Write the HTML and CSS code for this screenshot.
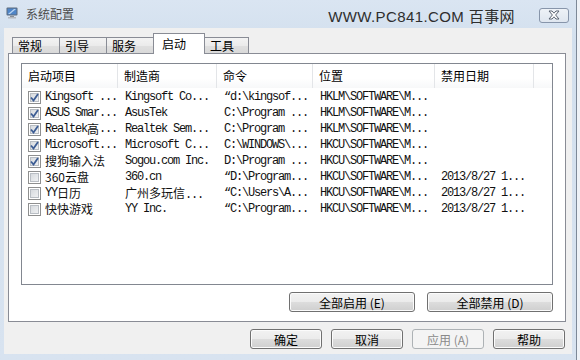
FILE: index.html
```html
<!DOCTYPE html>
<html lang="zh-CN">
<head>
    <meta charset="UTF-8">
    <title>系统配置</title>
    <link rel="stylesheet" href="styles.css">
</head>
<body>
    <div class="window">
        <div class="titlebar">
            <svg class="app-icon" width="12" height="12" viewBox="0 0 12 12">
                <rect x="0.5" y="0.5" width="11" height="8" rx="1" fill="#5c6a7c"/>
                <rect x="1.5" y="1.5" width="9" height="6" fill="#4f86c9"/>
                <path d="M2 7 L8 2 L10 2 L4 7 Z" fill="#bcd6f2"/>
                <rect x="4" y="9" width="4" height="1" fill="#8a8f96"/>
                <rect x="2" y="10" width="8" height="1.5" fill="#b4b8be"/>
            </svg>
            <span class="title">系统配置</span>
            <span class="watermark">WWW.PC841.COM 百事网</span>
            <div class="close">
                <svg width="14" height="10" viewBox="0 0 14 10">
                    <path d="M2 1 L5 1 L7 3.2 L9 1 L12 1 L8.6 5 L12 9 L9 9 L7 6.8 L5 9 L2 9 L5.4 5 Z" fill="#fff" stroke="#5b6472" stroke-width="1"/>
                </svg>
            </div>
        </div>

        <div class="client">
            <div class="tabs">
                <div class="tab tab-a">常规</div>
                <div class="tab tab-b">引导</div>
                <div class="tab tab-c">服务</div>
                <div class="tab tab-active">启动</div>
                <div class="tab tab-e">工具</div>
            </div>

            <div class="panel">
                <div class="listview">
                    <div class="lv-head">
                        <div class="hcell">启动项目</div>
                        <div class="hcell">制造商</div>
                        <div class="hcell">命令</div>
                        <div class="hcell">位置</div>
                        <div class="hcell">禁用日期</div>
                        <div class="hcell last"></div>
                    </div>

                    <div class="lv-row">
                        <div class="cell first"><span class="check on"><svg width="9" height="9" viewBox="0 0 9 9"><path d="M1 4.5 L3.5 7.5 L8 1" fill="none" stroke="#3d5d94" stroke-width="1.8"/></svg></span>Kingsoft ...</div>
                        <div class="cell">Kingsoft Co...</div>
                        <div class="cell">“d:\kingsof...</div>
                        <div class="cell">HKLM\SOFTWARE\M...</div>
                        <div class="cell"></div>
                    </div>
                    <div class="lv-row">
                        <div class="cell first"><span class="check on"><svg width="9" height="9" viewBox="0 0 9 9"><path d="M1 4.5 L3.5 7.5 L8 1" fill="none" stroke="#3d5d94" stroke-width="1.8"/></svg></span>ASUS Smar...</div>
                        <div class="cell">AsusTek</div>
                        <div class="cell">C:\Program ...</div>
                        <div class="cell">HKLM\SOFTWARE\M...</div>
                        <div class="cell"></div>
                    </div>
                    <div class="lv-row">
                        <div class="cell first"><span class="check on"><svg width="9" height="9" viewBox="0 0 9 9"><path d="M1 4.5 L3.5 7.5 L8 1" fill="none" stroke="#3d5d94" stroke-width="1.8"/></svg></span>Realtek<span class="cjk">高</span>...</div>
                        <div class="cell">Realtek Sem...</div>
                        <div class="cell">C:\Program ...</div>
                        <div class="cell">HKLM\SOFTWARE\M...</div>
                        <div class="cell"></div>
                    </div>
                    <div class="lv-row">
                        <div class="cell first"><span class="check on"><svg width="9" height="9" viewBox="0 0 9 9"><path d="M1 4.5 L3.5 7.5 L8 1" fill="none" stroke="#3d5d94" stroke-width="1.8"/></svg></span>Microsoft...</div>
                        <div class="cell">Microsoft C...</div>
                        <div class="cell">C:\WINDOWS\...</div>
                        <div class="cell">HKCU\SOFTWARE\M...</div>
                        <div class="cell"></div>
                    </div>
                    <div class="lv-row">
                        <div class="cell first"><span class="check on"><svg width="9" height="9" viewBox="0 0 9 9"><path d="M1 4.5 L3.5 7.5 L8 1" fill="none" stroke="#3d5d94" stroke-width="1.8"/></svg></span><span class="cjk">搜狗输入法</span></div>
                        <div class="cell">Sogou.com Inc.</div>
                        <div class="cell">D:\Program ...</div>
                        <div class="cell">HKCU\SOFTWARE\M...</div>
                        <div class="cell"></div>
                    </div>
                    <div class="lv-row">
                        <div class="cell first"><span class="check"></span><span class="cjk">360云盘</span></div>
                        <div class="cell">360.cn</div>
                        <div class="cell">“D:\Program...</div>
                        <div class="cell">HKCU\SOFTWARE\M...</div>
                        <div class="cell date">2013/8/27 1...</div>
                    </div>
                    <div class="lv-row">
                        <div class="cell first"><span class="check"></span>YY<span class="cjk">日历</span></div>
                        <div class="cell"><span class="cjk">广州多玩信</span>...</div>
                        <div class="cell">“C:\Users\A...</div>
                        <div class="cell">HKCU\SOFTWARE\M...</div>
                        <div class="cell date">2013/8/27 1...</div>
                    </div>
                    <div class="lv-row">
                        <div class="cell first"><span class="check"></span><span class="cjk">快快游戏</span></div>
                        <div class="cell">YY Inc.</div>
                        <div class="cell">“C:\Program...</div>
                        <div class="cell">HKCU\SOFTWARE\M...</div>
                        <div class="cell date">2013/8/27 1...</div>
                    </div>
                </div>

                <div class="panel-buttons">
                    <button class="btn btn-wide">全部启用 (E)</button>
                    <button class="btn btn-wide">全部禁用 (D)</button>
                </div>
            </div>

            <div class="dialog-buttons">
                <button class="btn">确定</button>
                <button class="btn">取消</button>
                <button class="btn disabled">应用 (A)</button>
                <button class="btn">帮助</button>
            </div>
        </div>
    </div>
</body>
</html>
```

FILE: styles.css
```css
/* Win7 basic 风格对话框 */
body {
    margin: 0;
    background-color: #eef2f7;
    font-family: "Noto Sans CJK SC", "Liberation Sans", sans-serif;
    font-size: 12px;
    color: #000;
}

.window {
    width: 576px;
    height: 360px;
    display: flex;
    flex-direction: column;
    background: linear-gradient(to bottom, #dae5f2, #d3e0ee 40px, #d8e3f0);
    border-right: 1px solid #7d8998;
}

.titlebar {
    height: 28px;
    display: flex;
    align-items: center;
    padding-left: 6px;
}

.app-icon {
    margin-top: -2px;
}

.title {
    margin-left: 8px;
    color: #4c4c4c;
    font-size: 12px;
    margin-top: -1px;
}

.watermark {
    margin-left: auto;
    margin-right: 24px;
    font-family: "Liberation Sans", "Noto Sans CJK SC", sans-serif;
    font-size: 15px;
    letter-spacing: 0.4px;
    color: #2e2e2e;
    margin-top: 2px;
}

.close {
    width: 30px;
    height: 15px;
    box-sizing: border-box;
    border: 1px solid #8795aa;
    border-radius: 3px;
    background: linear-gradient(to bottom, #eef2f7, #dfe6ef);
    display: flex;
    align-items: center;
    justify-content: center;
    margin-right: 7px;
    margin-top: 2px;
}

.client {
    flex: 1;
    margin: 0 4px 6px 4px;
    background-color: #f0f0f0;
    padding: 5px 6px 0 4px;
}

/* 选项卡 */
.tabs {
    height: 20px;
    display: flex;
    align-items: flex-end;
    padding-left: 4px;
}

.tab {
    box-sizing: border-box;
    height: 16px;
    border: 1px solid #898c95;
    border-bottom: none;
    margin-left: -1px;
    padding-left: 5px;
    line-height: 15px;
    background: linear-gradient(to bottom, #f3f3f3, #ebebeb 50%, #e0e0e0 50%, #d9d9d9);
    font-size: 12px;
}

.tab-a { width: 48px; margin-left: 0; }
.tab-b { width: 48px; }
.tab-c { width: 48px; }
.tab-e { width: 45px; }

.tab-active {
    width: 52px;
    height: 21px;
    margin-bottom: -1px;
    padding-left: 8px;
    line-height: 19px;
    background: #fff;
    position: relative;
    z-index: 1;
}

.panel {
    box-sizing: border-box;
    height: 269px;
    border: 1px solid #898c95;
    background-color: #fff;
    padding: 9px 12px 0 12px;
}

/* 列表 */
.listview {
    box-sizing: border-box;
    height: 222px;
    border: 1px solid #828790;
    background: #fff;
}

.lv-head,
.lv-row {
    display: grid;
    grid-template-columns: 96px 99px 96px 122px 99px 1fr;
}

.lv-head {
    height: 24px;
    margin-bottom: 1px;
    background: linear-gradient(to bottom, #fff 60%, #f7f8f9);
}

.hcell {
    border-right: 1px solid #e3e5e8;
    padding-left: 6px;
    line-height: 23px;
    font-size: 12px;
}

.hcell.last {
    border-right: none;
}

.lv-row {
    height: 16px;
}

.cell {
    padding-left: 7px;
    white-space: nowrap;
    overflow: hidden;
    font-family: "Liberation Mono", "Noto Sans CJK SC", monospace;
    font-size: 12px;
    letter-spacing: -1.2px;
    line-height: 16px;
    color: #111;
}

.cell.first {
    padding-left: 6px;
    display: flex;
    align-items: center;
}

.cell .cjk {
    font-family: "Noto Sans CJK SC", sans-serif;
    font-size: 12px;
    letter-spacing: 0;
}

.cell.date {
    padding-left: 6px;
}

.check {
    box-sizing: border-box;
    width: 13px;
    height: 13px;
    border: 1px solid #8e8f8f;
    padding: 1px;
    margin-right: 4px;
    flex-shrink: 0;
    display: flex;
    align-items: center;
    justify-content: center;
    box-shadow: inset 0 0 0 1px #fff, inset 0 0 0 2px #b9bec4;
    background-image: linear-gradient(135deg, #d0d4d9, #f6f7f8);
}

.check svg {
    display: block;
}

/* 按钮 */
.panel-buttons {
    display: flex;
    justify-content: flex-end;
    gap: 12px;
    margin-top: 7px;
}

.btn {
    box-sizing: border-box;
    width: 72px;
    height: 20px;
    padding: 0;
    border: 1px solid #707070;
    border-radius: 3px;
    background: linear-gradient(to bottom, #f2f2f2, #ebebeb 50%, #dddddd 50%, #cfcfcf);
    box-shadow: inset 0 0 0 1px #fbfbfb;
    font-family: "Noto Sans CJK SC", "Liberation Sans", sans-serif;
    font-size: 12px;
    line-height: 17px;
    color: #000;
}

.btn-wide {
    width: 126px;
}

.btn.disabled {
    border-color: #adb2b5;
    background: #f4f4f4;
    box-shadow: none;
    color: #8a8a8a;
}

.dialog-buttons {
    display: flex;
    justify-content: flex-end;
    gap: 9px;
    margin-top: 7px;
    padding-right: 1px;
}
```
